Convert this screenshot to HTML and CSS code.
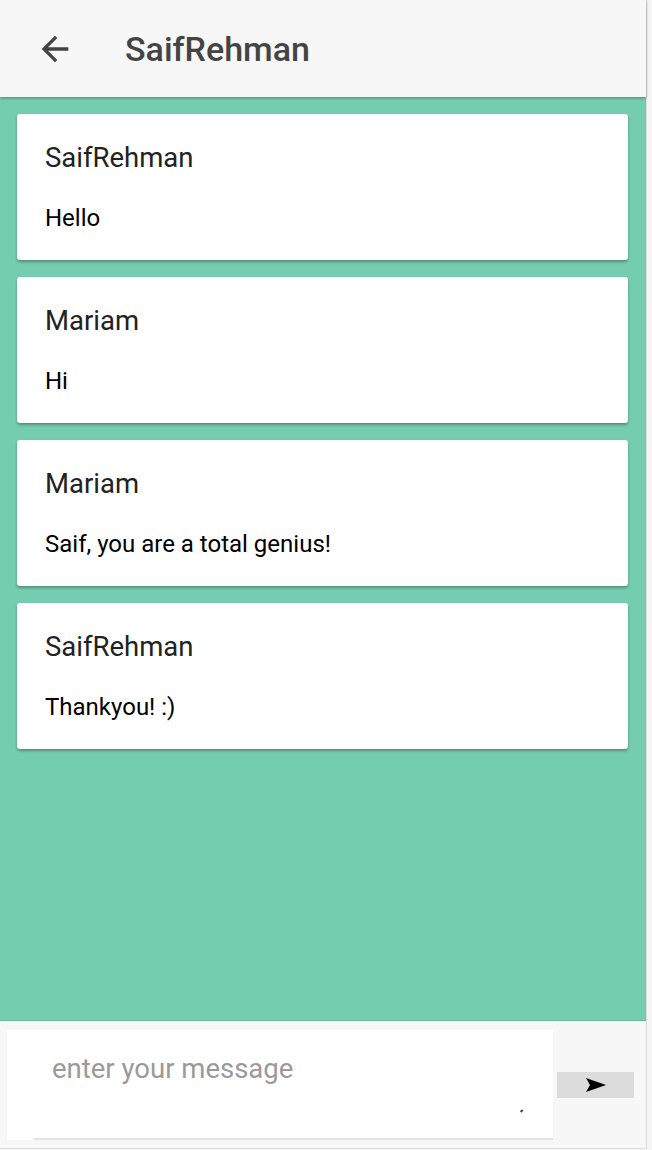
FILE: index.html
```html
<!DOCTYPE html>
<html>
<head>
<meta charset="utf-8">
<link rel="stylesheet" href="styles.css">
</head>
<body>
<div class="app">
  <header class="topbar">
    <svg class="back" viewBox="0 0 24 24" width="40" height="40"><path d="M20 11H7.83l5.59-5.59L12 4l-8 8 8 8 1.41-1.41L7.83 13H20v-2z" fill="#444"/></svg>
    <h1 class="title">SaifRehman</h1>
  </header>
  <main class="chat">
    <div class="card"><div class="name">SaifRehman</div><div class="msg">Hello</div></div>
    <div class="card"><div class="name">Mariam</div><div class="msg">Hi</div></div>
    <div class="card"><div class="name">Mariam</div><div class="msg">Saif, you are a total genius!</div></div>
    <div class="card"><div class="name">SaifRehman</div><div class="msg">Thankyou! :)</div></div>
  </main>
  <footer class="composer">
    <div class="field">
      <div class="input">enter your message</div>
      <div class="line"></div>
      <span class="grip"></span>
    </div>
    <button class="send"><svg viewBox="0 0 20 14" width="20" height="14"><polygon points="0,0 20,7 0,14 4,7" fill="#000"/></svg></button>
  </footer>
</div>
</body>
</html>
```
FILE: styles.css
```css
* { box-sizing: border-box; }
body {
  margin: 0;
  background: #f5f5f5;
  font-family: Roboto, "Noto Sans", sans-serif;
}
.app {
  width: 647px;
  height: 1149px;
  border-right: 1px solid #dcdcdc;
  border-bottom: 1px solid #dcdcdc;
  display: flex;
  flex-direction: column;
  background: #f7f7f7;
}
.topbar {
  height: 97px;
  flex: none;
  display: flex;
  align-items: center;
  background: #f7f7f7;
  box-shadow: 0 1px 3px rgba(0,0,0,0.35);
  position: relative;
  z-index: 2;
}
.back { margin-left: 35px; flex: none; }
.title {
  margin: 0 0 0 50px;
  font-size: 34px;
  font-weight: 500;
  color: #444;
}
.chat {
  height: 924px;
  flex: none;
  background: #75cdb0;
  padding: 17px 18px 0 17px;
  display: flex;
  flex-direction: column;
  gap: 17px;
  border-bottom: 1px solid #6ab89e;
}
.card {
  background: #fff;
  border-radius: 3px;
  box-shadow: 0 2px 3px rgba(0,0,0,0.3);
  padding: 24px 28px 22px;
  display: flex;
  flex-direction: column;
  gap: 20px;
}
.name {
  font-size: 27.5px;
  line-height: 40px;
  color: #222;
}
.msg {
  font-size: 24px;
  line-height: 40px;
  color: #000;
}
.composer {
  flex: 1;
  display: flex;
  align-items: center;
  padding: 0 12px 0 7px;
  gap: 4px;
}
.field {
  width: 546px;
  height: 110px;
  background: #fff;
  position: relative;
  display: flex;
  flex-direction: column;
}
.input {
  flex: 1;
  padding: 23px 0 0 45px;
  font-size: 27.5px;
  line-height: 32px;
  color: #9a9a9a;
}
.line {
  margin-left: 27px;
  height: 2px;
  background: #e4e4e4;
}
.grip {
  position: absolute;
  left: 513px;
  top: 80px;
  width: 3px;
  height: 1.5px;
  background: #444;
  transform: rotate(-45deg);
}
.send {
  width: 77px;
  height: 26px;
  border: none;
  background: #dcdcdc;
  padding: 0;
  display: flex;
  align-items: center;
  justify-content: center;
}
.send svg { display: block; margin-left: 1px; }
```
